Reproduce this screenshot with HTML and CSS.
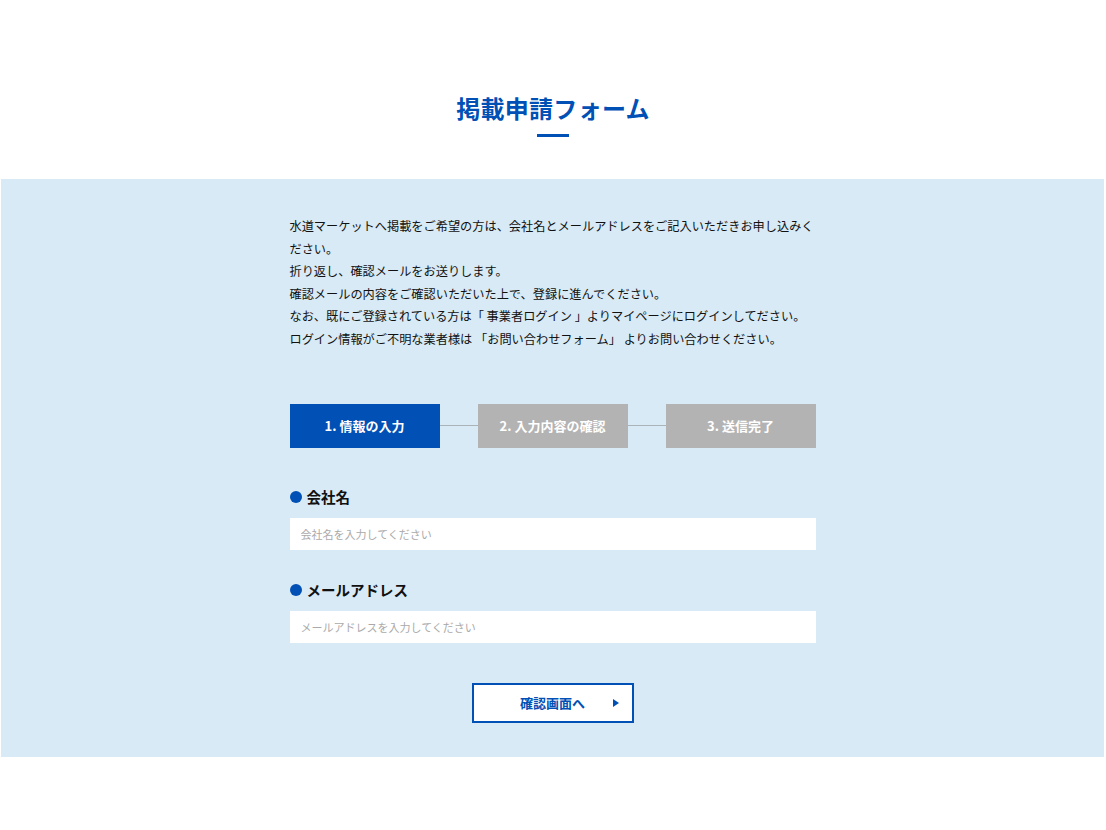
FILE: index.html
```html
<!DOCTYPE html>
<html lang="ja">
<head>
  <meta charset="UTF-8">
  <title>掲載申請フォーム</title>
  <link rel="stylesheet" href="styles.css">
</head>
<body>

  <div class="page-head">
    <h1 class="page-title">掲載申請フォーム</h1>
    <div class="title-bar"></div>
  </div>

  <div class="band">
    <div class="inner">
      <p class="lead">
        水道マーケットへ掲載をご希望の方は、会社名とメールアドレスをご記入いただきお申し込みください。<br>
        折り返し、確認メールをお送りします。<br>
        確認メールの内容をご確認いただいた上で、登録に進んでください。<br>
        なお、既にご登録されている方は「 事業者ログイン 」よりマイページにログインしてださい。<br>
        ログイン情報がご不明な業者様は 「お問い合わせフォーム」 よりお問い合わせください。
      </p>

      <div class="steps">
        <div class="step active">1. 情報の入力</div>
        <div class="step-line"></div>
        <div class="step">2. 入力内容の確認</div>
        <div class="step-line"></div>
        <div class="step">3. 送信完了</div>
      </div>

      <form class="form">
        <div class="field">
          <label class="label" for="company"><span class="dot"></span>会社名</label>
          <input id="company" class="input" type="text" placeholder="会社名を入力してください">
        </div>
        <div class="field">
          <label class="label" for="mail"><span class="dot"></span>メールアドレス</label>
          <input id="mail" class="input" type="text" placeholder="メールアドレスを入力してください">
        </div>
        <div class="actions">
          <button type="button" class="btn">確認画面へ<span class="arrow"></span></button>
        </div>
      </form>
    </div>
  </div>

</body>
</html>
```

FILE: styles.css
```css
* {
  box-sizing: border-box;
}

html, body {
  margin: 0;
  background: #fff;
  font-family: "Noto Sans CJK JP", "Noto Sans", sans-serif;
  color: #1a1a1a;
}

.page-head {
  padding-top: 90px;
  height: 179px;
  display: flex;
  flex-direction: column;
  align-items: center;
}

.page-title {
  margin: 0;
  font-size: 24px;
  line-height: 36px;
  font-weight: 700;
  color: #0050b5;
  letter-spacing: 0.3px;
}

.title-bar {
  width: 32px;
  height: 3px;
  margin-top: 8px;
  background: #0050b5;
}

.band {
  background: #d8eaf5;
  margin: 0 2px 0 1px;
  padding: 36px 0 34px;
}

.inner {
  width: 526px;
  margin: 0 auto;
}

.lead {
  margin: 0;
  font-size: 12.2px;
  line-height: 22.6px;
  color: #111;
}

.steps {
  display: flex;
  align-items: center;
  margin-top: 53px;
}

.step {
  width: 150px;
  height: 44px;
  display: flex;
  align-items: center;
  justify-content: center;
  background: #b3b3b3;
  color: #fff;
  font-size: 13px;
  font-weight: 700;
}

.step.active {
  background: #0050b5;
}

.step-line {
  flex: 1;
  height: 1px;
  background: #a9b3b8;
}

.form {
  margin-top: 38px;
}

.field + .field {
  margin-top: 29px;
}

.label {
  display: flex;
  align-items: center;
  font-size: 14.5px;
  line-height: 22px;
  font-weight: 700;
  color: #111;
}

.dot {
  width: 12px;
  height: 12px;
  border-radius: 50%;
  background: #0050b5;
  margin: 0 5px 0 0;
}

.input {
  display: block;
  width: 100%;
  height: 32px;
  margin-top: 10px;
  border: none;
  outline: none;
  background: #fff;
  padding: 0 11px;
  font-family: inherit;
  font-size: 11px;
  color: #333;
}

.input::placeholder {
  color: #aaa;
}

.actions {
  display: flex;
  justify-content: center;
  margin-top: 40px;
}

.btn {
  position: relative;
  width: 162px;
  height: 40px;
  background: #fff;
  border: 2px solid #0050b5;
  color: #0050b5;
  font-family: inherit;
  font-size: 13px;
  font-weight: 700;
  cursor: pointer;
  padding: 0;
}

.arrow {
  position: absolute;
  right: 13px;
  top: 50%;
  margin-top: -4px;
  width: 0;
  height: 0;
  border-top: 4px solid transparent;
  border-bottom: 4px solid transparent;
  border-left: 6px solid #0050b5;
}
```
